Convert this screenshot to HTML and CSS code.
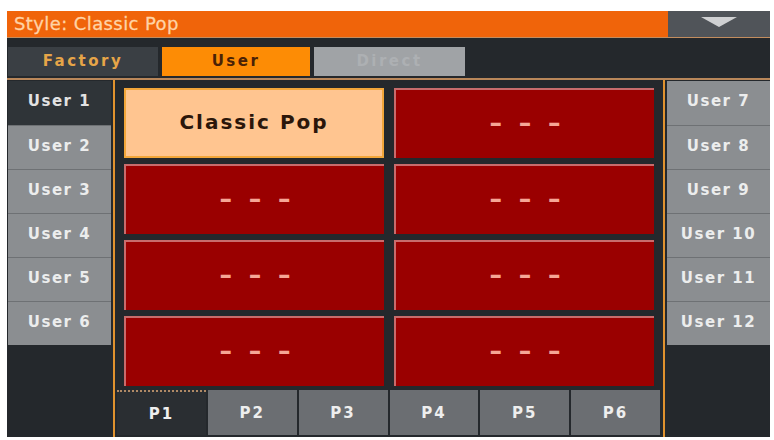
FILE: index.html
```html
<!DOCTYPE html>
<html>
<head>
<meta charset="utf-8">
<link rel="stylesheet" href="styles.css">
</head>
<body>
<div class="screen">
  <div class="titlebar">
    <div class="title">Style: Classic Pop</div>
    <div class="dropdown">
      <svg width="36" height="10" viewBox="0 0 36 10"><polygon points="0,0 36,0 18,10" fill="#cfd0d2"/></svg>
    </div>
  </div>
  <div class="tabs">
    <div class="tab factory">Factory</div>
    <div class="tab user">User</div>
    <div class="tab direct">Direct</div>
  </div>
  <div class="main">
    <div class="side left">
      <div class="row selected">User 1</div>
      <div class="row">User 2</div>
      <div class="row">User 3</div>
      <div class="row">User 4</div>
      <div class="row">User 5</div>
      <div class="row">User 6</div>
    </div>
    <div class="vline"></div>
    <div class="content">
      <div class="grid">
        <div class="btn active">Classic Pop</div>
        <div class="btn empty">– – –</div>
        <div class="btn empty">– – –</div>
        <div class="btn empty">– – –</div>
        <div class="btn empty">– – –</div>
        <div class="btn empty">– – –</div>
        <div class="btn empty">– – –</div>
        <div class="btn empty">– – –</div>
      </div>
      <div class="pages">
        <div class="page current">P1</div>
        <div class="page">P2</div>
        <div class="page">P3</div>
        <div class="page">P4</div>
        <div class="page">P5</div>
        <div class="page">P6</div>
      </div>
    </div>
    <div class="vline"></div>
    <div class="side right">
      <div class="row">User 7</div>
      <div class="row">User 8</div>
      <div class="row">User 9</div>
      <div class="row">User 10</div>
      <div class="row">User 11</div>
      <div class="row">User 12</div>
    </div>
  </div>
</div>
</body>
</html>
```

FILE: styles.css
```css
html, body {
  margin: 0;
  padding: 0;
  background: #ffffff;
}
body {
  font-family: "DejaVu Sans", "Liberation Sans", sans-serif;
}
.screen {
  margin: 11px 0 0 7px;
  width: 763px;
  height: 426px;
  background: #24282c;
  display: flex;
  flex-direction: column;
  overflow: hidden;
}
.titlebar {
  display: flex;
  height: 26px;
  border-bottom: 1px solid #c38d5e;
  flex: none;
}
.title {
  flex: 1;
  background: #f0640a;
  color: #ffd3a6;
  font-size: 18px;
  line-height: 26px;
  padding-left: 7px;
  letter-spacing: 0.4px;
  -webkit-text-stroke: 0.3px #ffd3a6;
}
.dropdown {
  width: 102px;
  background: #505459;
  display: flex;
  justify-content: center;
  padding-top: 6px;
  box-sizing: border-box;
}
.tabs {
  flex: none;
  height: 42px;
  box-sizing: border-box;
  padding: 9px 0 4px 1px;
  display: flex;
  gap: 4px;
  border-bottom: 2px solid #b9875a;
}
.tab {
  height: 29px;
  line-height: 29px;
  text-align: center;
  font-weight: bold;
  font-size: 15px;
  letter-spacing: 2.5px;
}
.factory {
  width: 150px;
  background: #3a3f44;
  color: #e6a548;
}
.user {
  width: 148px;
  background: #fd8c05;
  color: #4a2206;
}
.direct {
  width: 151px;
  background: #a0a3a6;
  color: #adb0b3;
}
.main {
  flex: 1;
  display: flex;
}
.side {
  width: 103px;
  padding-top: 1px;
  display: flex;
  flex-direction: column;
}
.side.left {
  margin: 0 2px 0 1px;
}
.side.right {
  margin-left: 2px;
}
.row {
  height: 44px;
  box-sizing: border-box;
  background: #8b8e91;
  border-top: 1px solid #6e7174;
  color: #eceded;
  font-weight: bold;
  font-size: 15px;
  letter-spacing: 1.5px;
  display: flex;
  align-items: center;
  justify-content: center;
  padding-bottom: 4px;
}
.row:first-child {
  border-top: none;
}
.row.selected {
  background: #2f3438;
  color: #e2e2e2;
}
.vline {
  width: 2px;
  background: #e0922e;
}
.content {
  width: 548px;
  display: flex;
  flex-direction: column;
}
.grid {
  padding: 8px 9px 0;
  display: grid;
  grid-template-columns: 260px 260px;
  grid-auto-rows: 70px;
  gap: 6px 10px;
}
.btn {
  display: flex;
  align-items: center;
  justify-content: center;
  box-sizing: border-box;
}
.btn.active {
  background: #ffc590;
  border: 2px solid #f2a63a;
  color: #2b160a;
  font-weight: bold;
  font-size: 20px;
  letter-spacing: 2px;
  padding-bottom: 2px;
}
.btn.empty {
  background: #9a0000;
  border-top: 2px solid #c86c6c;
  border-left: 2px solid #c86c6c;
  color: #f6a696;
  font-size: 25px;
  font-weight: bold;
  word-spacing: 8px;
  padding-bottom: 3px;
}
.pages {
  margin: 4px 3px 0 2px;
  height: 45px;
  display: grid;
  grid-template-columns: repeat(6, 1fr);
  gap: 2px;
}
.page {
  background: #6b6e72;
  color: #eeeeee;
  font-weight: bold;
  font-size: 15px;
  letter-spacing: 2px;
  display: flex;
  align-items: center;
  justify-content: center;
}
.page.current {
  background: #2a2e32;
  border-top: 2px dotted #b08a66;
  box-sizing: border-box;
}
```
